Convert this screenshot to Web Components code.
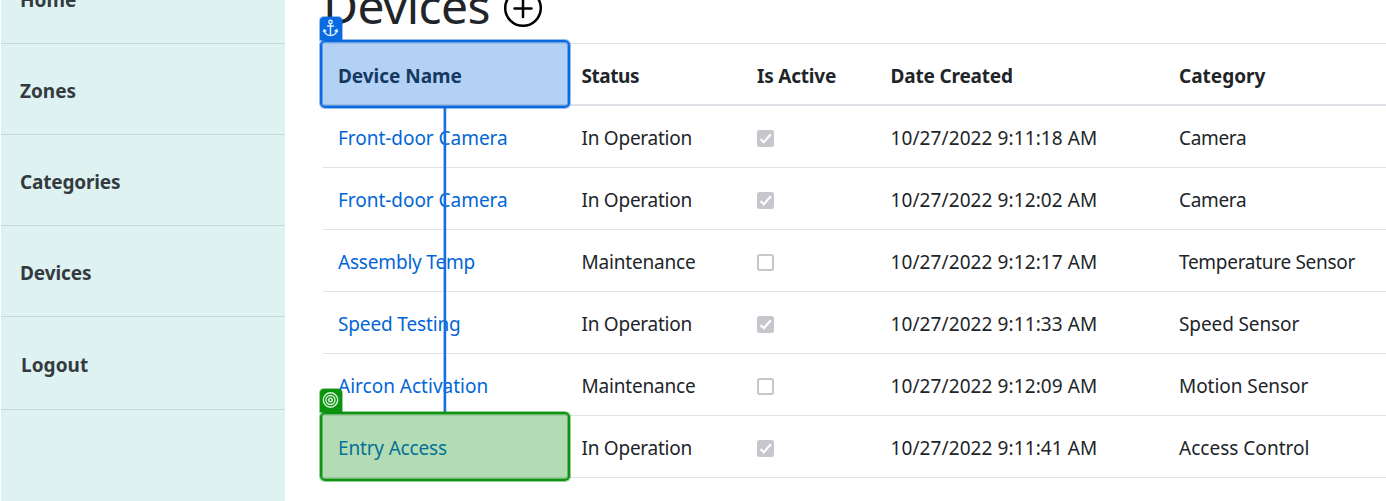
<!DOCTYPE html>
<html lang="en">
<head>
<meta charset="utf-8">
<title>Devices</title>
<style>
html,body{margin:0;height:501px;overflow:hidden;background:#fff}
body{font:19px "Noto Sans","Open Sans",sans-serif;color:#212529}
</style>
</head>
<body>
<device-app></device-app>
<script>
const define = (name, html, setup) => {
  const template = document.createElement('template');
  template.innerHTML = html;
  customElements.define(name, class extends HTMLElement {
    connectedCallback() {
      if (this.shadowRoot) return;
      this.attachShadow({mode: 'open'}).append(template.content.cloneNode(true));
      if (setup) setup(this, this.shadowRoot);
    }
  });
};
const pen = document.createElement('canvas').getContext('2d');

// A label whose tracking is set so its glyphs span the width in "w".
define('fit-text', `<style>:host{display:inline-block;white-space:pre}</style><slot></slot>`, host => {
  const cs = getComputedStyle(host), text = host.textContent;
  pen.font = `${cs.fontWeight} ${cs.fontSize} ${cs.fontFamily}`;
  const m = pen.measureText(text);
  const ink = m.actualBoundingBoxRight + m.actualBoundingBoxLeft;
  host.style.letterSpacing = ((+host.getAttribute('w') - ink) / (text.length - 1)).toFixed(3) + 'px';
});

define('nav-item', `<style>
:host{display:flex;align-items:center;box-sizing:border-box;height:91px;padding:4px 0 0 19px;border-bottom:1px solid #c3dad9;font-weight:700;color:#343a40;flex:none}
:host([last]){height:93px;padding-left:20px}
</style><slot></slot>`);

define('side-nav', `<style>
:host{display:flex;flex-direction:column;justify-content:flex-start;width:284px;margin-left:1px;height:501px;overflow:hidden;background:#def2f1;flex:none}
nav{display:flex;flex-direction:column;margin-top:-47px}
</style><nav>
<nav-item><fit-text w="55">Home</fit-text></nav-item>
<nav-item><fit-text w="55.5">Zones</fit-text></nav-item>
<nav-item><fit-text w="99">Categories</fit-text></nav-item>
<nav-item><fit-text w="70">Devices</fit-text></nav-item>
<nav-item last><fit-text w="66">Logout</fit-text></nav-item>
</nav>`);

define('check-box', `<style>
:host{display:block;width:17px;height:17px;margin-top:1px}
svg{display:block}
.on{display:none}
:host([checked]) .on{display:block}
:host([checked]) .off{display:none}
</style><svg class="on" width="17" height="17"><rect width="17" height="17" rx="2.5" fill="#c6c6cd"/><path d="M3.5 8.9l3.3 3.4 7-8" fill="none" stroke="#fff" stroke-width="2.1"/></svg>
<svg class="off" width="17" height="17"><rect x="1" y="1" width="15" height="15" rx="1.8" fill="#fff" stroke="#c6c6cd" stroke-width="2"/></svg>`);

define('table-row', `<style>
:host{display:grid;grid-template-columns:243.5px 175.5px 133.5px 288.5px 1fr;align-items:center;box-sizing:border-box;height:62px;padding:3px 0 0 15px;border-bottom:1px solid #dee2e6}
:host([head]){height:63px;padding-top:3px;border-top:1px solid #dee2e6;border-bottom:2px solid #dee2e6;font-weight:700}
::slotted(.link){color:#0366d6}
::slotted(*){justify-self:start}
</style><slot></slot>`);

define('device-table', `<style>:host{display:block}</style>
<table-row head><fit-text w="122.5">Device Name</fit-text><fit-text w="57.5">Status</fit-text><fit-text w="79">Is Active</fit-text><fit-text w="120.5">Date Created</fit-text><fit-text w="85.5">Category</fit-text></table-row>
<div></div>`, (host, root) => {
  const status = {o: ['In Operation', 110], m: ['Maintenance', 112.5]};
  root.querySelector('div').innerHTML = [
    ['Front-door Camera', 168, 'o', '9:11:18', 'Camera', 66],
    ['Front-door Camera', 168, 'o', '9:12:02', 'Camera', 66],
    ['Assembly Temp', 136.5, 'm', '9:12:17', 'Temperature Sensor', 176.5],
    ['Speed Testing', 122, 'o', '9:11:33', 'Speed Sensor', 120.5],
    ['Aircon Activation', 149.5, 'm', '9:12:09', 'Motion Sensor', 128.5],
    ['Entry Access', 108, 'o', '9:11:41', 'Access Control', 129.5]
  ].map(([name, nw, s, time, cat, cw]) => `<table-row><fit-text class="link" w="${nw}">${name}</fit-text><fit-text w="${status[s][1]}">${status[s][0]}</fit-text><check-box ${s === 'o' ? 'checked' : ''}></check-box><fit-text w="204.5">10/27/2022 ${time} AM</fit-text><fit-text w="${cw}">${cat}</fit-text></table-row>`).join('');
});

define('page-title', `<style>
:host{display:flex;height:43px;font-size:48px;align-items:flex-start}
fit-text{line-height:60px;margin:-24px 0 0 0}
svg{margin:-12px 0 0 13.5px;flex:none}
</style><fit-text w="161.5">Devices</fit-text><svg width="40" height="40"><g fill="none" stroke="#000" stroke-width="2.5"><circle cx="20" cy="20" r="17.8"/><path d="M20 12v17M11.5 20.5h17" stroke-linecap="round"/></g></svg>`);

// Highlight frame with a badge, laid over a table cell.
define('mark-frame', `<style>
:host{position:absolute;box-sizing:border-box;width:250px;border:2px solid var(--c);border-radius:5px;background:var(--fill);box-shadow:0 0 0 1px var(--halo),inset 0 0 0 1px var(--halo)}
i{position:absolute;left:-2px;top:-25px;width:22px;height:23px;border-radius:4px 4px 0 0;background:var(--c);box-shadow:0 0 0 1px var(--halo)}
svg{display:block;margin-left:-1px}
.target{display:none}
:host([target]) .target{display:block}
:host([target]) .anchor{display:none}
</style><i>
<svg class="anchor" width="23" height="23" fill="none" stroke="#dcebff" stroke-width="1.4" stroke-linecap="round"><circle cx="11.5" cy="5" r="1.7"/><path d="M11.5 7v11M8.5 9h6M5.2 13c.4 3.6 3 5.5 6.3 5.5s5.9-1.9 6.3-5.5M4.5 14.5l.7-1.7 1.7 1.1M18.5 14.5l-.7-1.7-1.7 1.1"/></svg>
<svg class="target" width="23" height="23" fill="none" stroke="#d6f0d6" stroke-width="1.4"><circle cx="11.5" cy="11" r="7.2"/><circle cx="11.5" cy="11" r="4.5"/><circle cx="11.5" cy="11" r="1.8"/></svg>
</i>`);

define('device-app', `<style>
:host{display:flex;position:relative;width:1386px;height:501px;overflow:hidden}
main{flex:1;padding-left:38px;min-width:0}
.link-line{position:absolute;left:443px;top:108px;width:4px;height:304px;background:linear-gradient(90deg,rgba(9,107,226,.4) 0 1px,#1470e2 1px 3px,rgba(9,107,226,.2) 3px)}
.a{left:320px;top:40px;height:68px;--c:#096be2;--fill:rgba(0,102,221,.3);--halo:rgba(0,92,210,.4)}
.b{left:320px;top:412px;height:69px;--c:#0c930f;--fill:rgba(5,140,5,.3);--halo:rgba(0,130,0,.4)}
</style><side-nav></side-nav><main><page-title></page-title><device-table></device-table></main>
<div class="link-line"></div><mark-frame class="a"></mark-frame><mark-frame class="b" target></mark-frame>`);
</script>
</body>
</html>
